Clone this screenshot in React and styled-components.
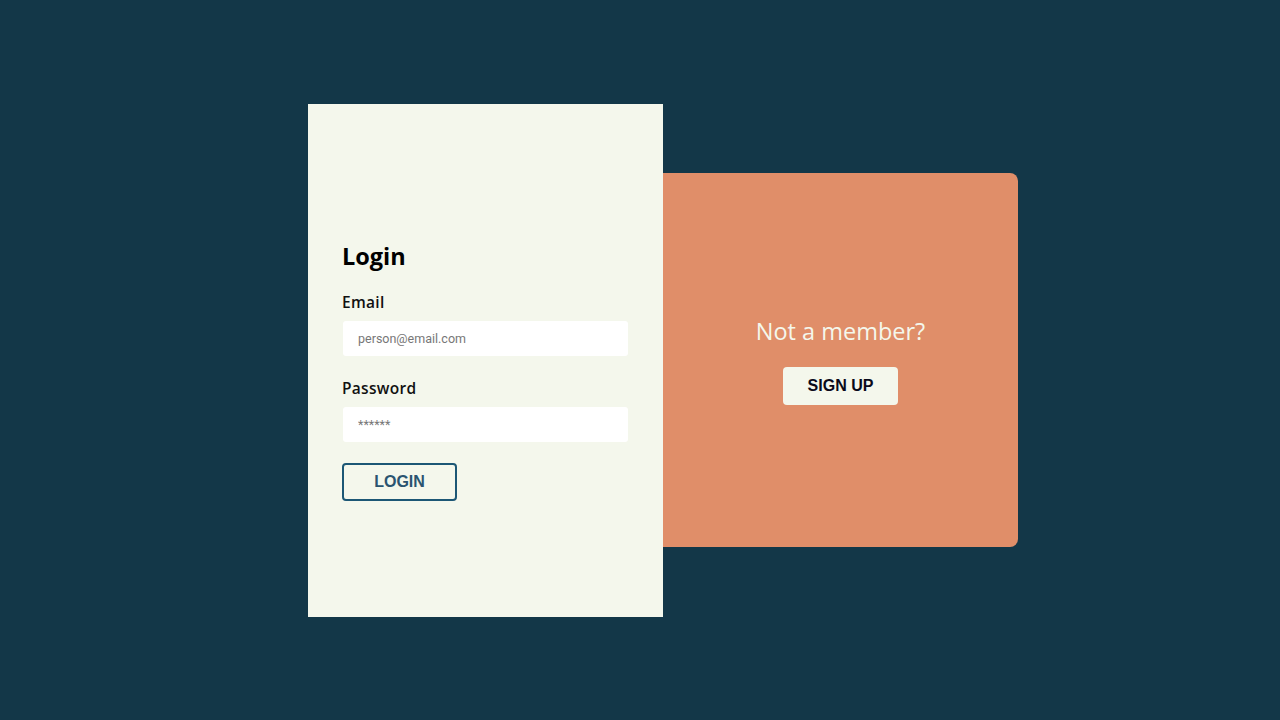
import React from "react";
import styled, { createGlobalStyle } from "styled-components";

const GlobalStyle = createGlobalStyle`
  html, body {
    margin: 0;
    padding: 0;
    height: 100%;
  }
  body {
    background: #133748;
    font-family: "Open Sans", "Noto Sans", sans-serif;
  }
  #root {
    height: 100%;
  }
`;

const Page = styled.div`
  height: 100vh;
  display: flex;
  align-items: center;
  justify-content: center;
  box-sizing: border-box;
  padding-left: 46px;
`;

const Wrapper = styled.div`
  display: flex;
  align-items: center;
`;

const LoginPanel = styled.div`
  width: 355px;
  height: 513px;
  background: #f4f7ec;
  box-sizing: border-box;
  padding: 136px 34px 0 34px;
  display: flex;
  flex-direction: column;
`;

const Title = styled.h2`
  margin: 0 0 20px 0;
  font-size: 23.5px;
  font-weight: 700;
  color: #000;
  line-height: 32px;
`;

const Label = styled.label`
  display: block;
  font-size: 15.5px;
  letter-spacing: 0.3px;
  font-weight: 600;
  color: #111;
  line-height: 20px;
  margin-bottom: 9px;
`;

const Input = styled.input`
  width: 285px;
  height: 35px;
  margin-left: 1px;
  margin-bottom: ${(p) => p.$gap || "0"};
  border: none;
  border-radius: 3px;
  background: #fff;
  padding: 0 15px;
  box-sizing: border-box;
  font-family: Roboto, "Liberation Sans", sans-serif;
  font-size: 12.5px;
  color: #333;
  outline: none;
  &::placeholder {
    color: #777;
  }
`;

const LoginButton = styled.button`
  width: 115px;
  height: 38px;
  border: 2px solid #1c5775;
  border-radius: 4px;
  background: transparent;
  color: #2a5470;
  font-family: "Liberation Sans", Arial, sans-serif;
  font-weight: 700;
  font-size: 16px;
  cursor: pointer;
`;

const SidePanel = styled.div`
  width: 355px;
  height: 374px;
  background: #e08e69;
  border-radius: 0 8px 8px 0;
  display: flex;
  flex-direction: column;
  align-items: center;
  justify-content: center;
  gap: 21px;
`;

const SideText = styled.h3`
  margin: 0;
  font-size: 23.5px;
  font-weight: 400;
  color: #f4f7ec;
  line-height: 30px;
`;

const SignUpButton = styled.button`
  width: 115px;
  height: 38px;
  border: none;
  border-radius: 4px;
  background: #f4f7ec;
  color: #0a0a1a;
  font-family: "Liberation Sans", Arial, sans-serif;
  font-weight: 700;
  font-size: 16px;
  cursor: pointer;
`;

const Field = styled.div`
  display: flex;
  flex-direction: column;
`;

const App = () => {
  return (
    <>
      <GlobalStyle />
      <Page>
        <Wrapper>
          <LoginPanel>
            <Title>Login</Title>
            <Field>
              <Label>Email</Label>
              <Input type="email" placeholder="person@email.com" $gap="22px" />
            </Field>
            <Field>
              <Label>Password</Label>
              <Input type="password" placeholder="******" $gap="21px" />
            </Field>
            <div>
              <LoginButton>LOGIN</LoginButton>
            </div>
          </LoginPanel>
          <SidePanel>
            <SideText>Not a member?</SideText>
            <SignUpButton>SIGN UP</SignUpButton>
          </SidePanel>
        </Wrapper>
      </Page>
    </>
  );
};

export default App;
